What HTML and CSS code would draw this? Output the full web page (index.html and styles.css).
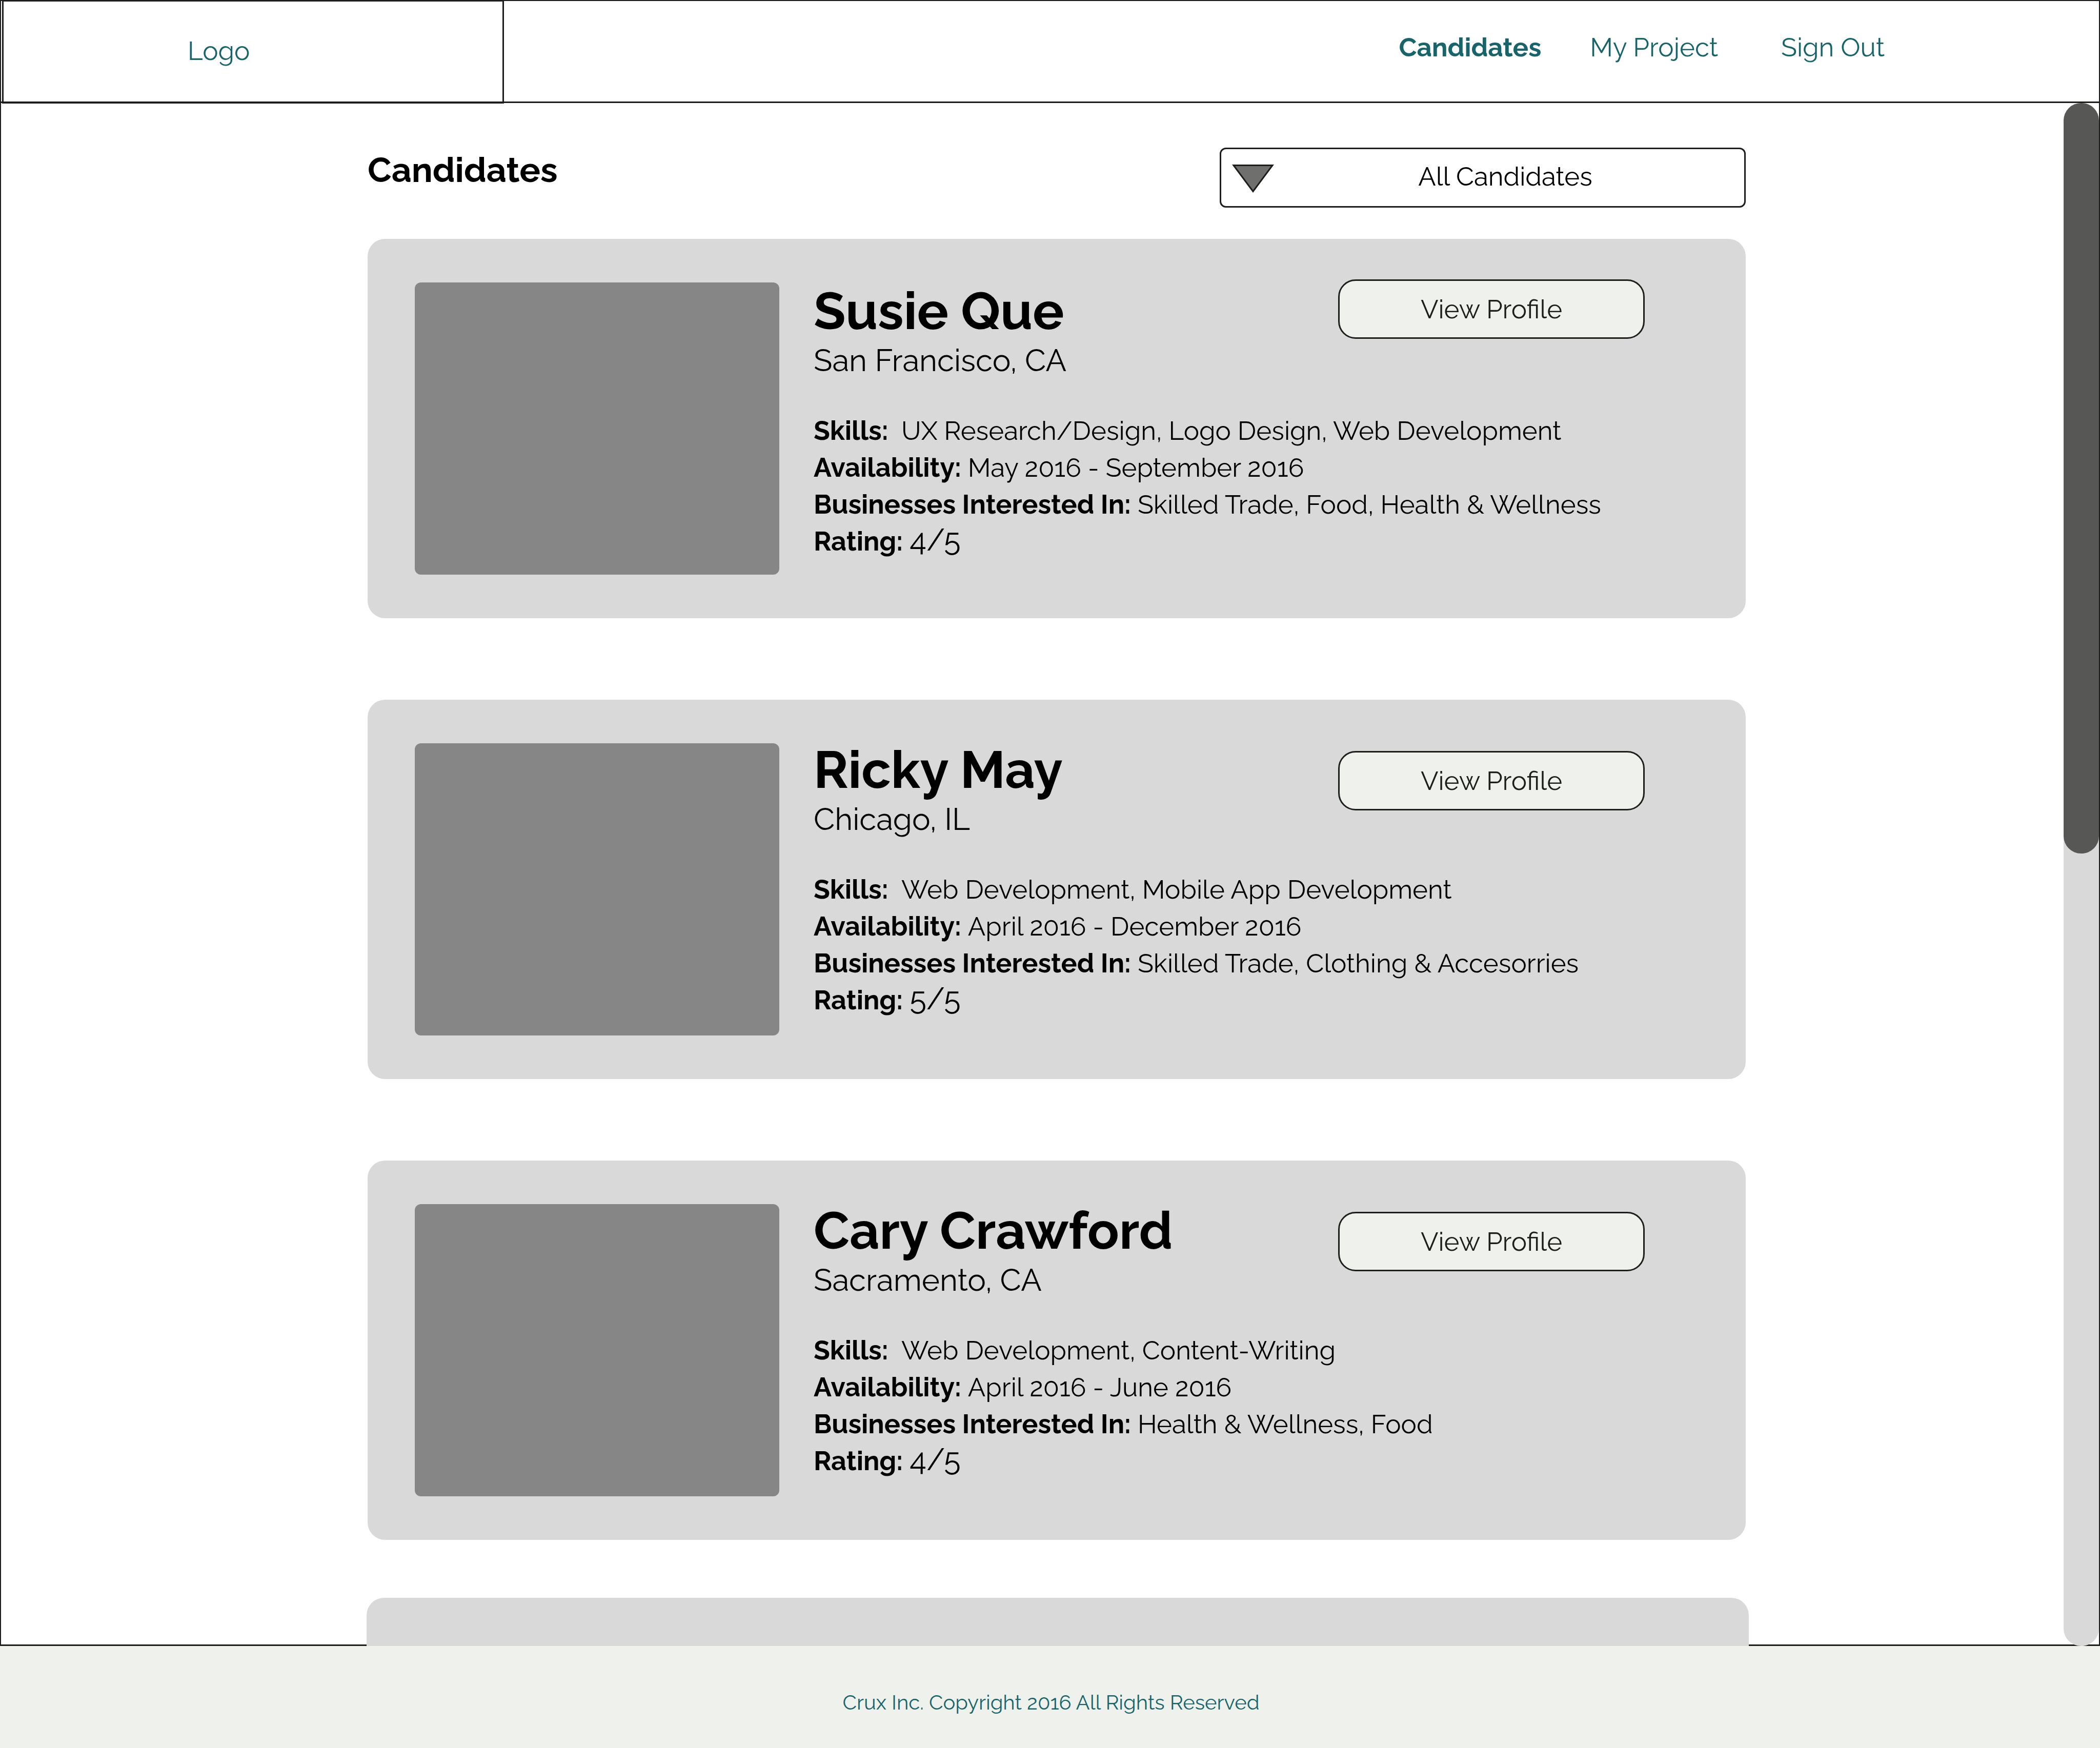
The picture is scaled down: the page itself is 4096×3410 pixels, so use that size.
FILE: index.html
```html
<!DOCTYPE html>
<html lang="en">
<head>
<meta charset="utf-8">
<title>Candidates</title>
<link rel="stylesheet" href="styles.css">
</head>
<body>
<header class="site-header">
  <a class="logo" href="#">Logo</a>
  <nav class="site-nav" aria-label="Main">
    <a class="nav-link nav-link-current" href="#" aria-current="page">Candidates</a>
    <a class="nav-link" href="#">My Project</a>
    <a class="nav-link nav-link-account" href="#">Sign Out</a>
  </nav>
</header>

<main class="page">
  <div class="content">
    <div class="toolbar">
      <h1 class="page-title">Candidates</h1>
      <div class="filter">
        <select class="filter-select" aria-label="Filter candidates">
          <option>All Candidates</option>
        </select>
        <svg class="filter-arrow" viewBox="0 0 82 55" aria-hidden="true"><path d="M3 1.5H79L41 52.5Z"/></svg>
      </div>
    </div>

    <article class="card">
      <div class="photo"></div>
      <div class="info">
        <h2 class="name">Susie Que</h2>
        <p class="city">San Francisco, CA</p>
        <dl class="facts">
          <div class="fact"><dt>Skills:&nbsp;</dt> <dd>UX Research/Design, Logo Design, Web Development</dd></div>
          <div class="fact"><dt>Availability:</dt> <dd>May 2016 - September 2016</dd></div>
          <div class="fact"><dt>Businesses Interested In:</dt> <dd>Skilled Trade, Food, Health &amp; Wellness</dd></div>
          <div class="fact"><dt>Rating:</dt> <dd class="rating">4/5</dd></div>
        </dl>
      </div>
      <button class="profile-button" type="button">View Profile</button>
    </article>

    <article class="card card-compact">
      <div class="photo"></div>
      <div class="info">
        <h2 class="name">Ricky May</h2>
        <p class="city">Chicago, IL</p>
        <dl class="facts">
          <div class="fact"><dt>Skills:&nbsp;</dt> <dd>Web Development, Mobile App Development</dd></div>
          <div class="fact"><dt>Availability:</dt> <dd>April 2016 - December 2016</dd></div>
          <div class="fact"><dt>Businesses Interested In:</dt> <dd>Skilled Trade, Clothing &amp; Accesorries</dd></div>
          <div class="fact"><dt>Rating:</dt> <dd class="rating">5/5</dd></div>
        </dl>
      </div>
      <button class="profile-button" type="button">View Profile</button>
    </article>

    <article class="card card-compact">
      <div class="photo"></div>
      <div class="info">
        <h2 class="name">Cary Crawford</h2>
        <p class="city">Sacramento, CA</p>
        <dl class="facts">
          <div class="fact"><dt>Skills:&nbsp;</dt> <dd>Web Development, Content-Writing</dd></div>
          <div class="fact"><dt>Availability:</dt> <dd>April 2016 - June 2016</dd></div>
          <div class="fact"><dt>Businesses Interested In:</dt> <dd>Health &amp; Wellness, Food</dd></div>
          <div class="fact"><dt>Rating:</dt> <dd class="rating">4/5</dd></div>
        </dl>
      </div>
      <button class="profile-button" type="button">View Profile</button>
    </article>

    <div class="card-peek"></div>
  </div>

  <div class="scroll-track"><div class="scroll-thumb"></div></div>
</main>

<footer class="site-footer">
  <p class="copyright">Crux Inc. Copyright 2016 All Rights Reserved</p>
</footer>
</body>
</html>
```
FILE: styles.css
```css
:root {
  --ink: #1d1d1b;
  --teal: #17656a;
  --panel: #d9d9d9;
  --pale: #eff1ec;
}

* {
  box-sizing: border-box;
}

body {
  margin: 0;
  min-height: 100vh;
  display: flex;
  flex-direction: column;
  background: #fff;
  color: #000;
  font-family: "Raleway", "Lato", sans-serif;
  font-size: 51px;
  line-height: 60px;
}

h1, h2, p, dl, dd {
  margin: 0;
}

/* Header */
.site-header {
  display: flex;
  justify-content: space-between;
  height: 201px;
  padding-left: 2px;
  border: 2px solid var(--ink);
  border-bottom-width: 3px;
}

.logo {
  display: flex;
  flex: none;
  align-items: center;
  width: calc(24% - 3px);
  margin: -2px 0 -4px;
  padding: 0 0 4px 359px;
  border: 3px solid var(--ink);
  color: var(--teal);
  text-decoration: none;
}

.site-nav {
  display: flex;
  gap: 95px;
  margin-right: 418px;
  padding-top: 60px;
}

.nav-link {
  color: var(--teal);
  text-decoration: none;
}

.nav-link-current {
  font-weight: 700;
}

.nav-link-account {
  margin-left: 28px;
}

/* Scrolling page area */
.page {
  flex: 1;
  display: grid;
  grid-template-columns: 715fr 2688fr 689fr;
  border: 2px solid var(--ink);
  border-width: 0 2px 3px;
}

.content {
  grid-column: 2;
  display: flex;
  flex-direction: column;
  margin-bottom: -3px;
}

.toolbar {
  display: flex;
  justify-content: space-between;
  padding: 87px 0 61px;
}

.page-title {
  padding-top: 3px;
  font-size: 68px;
  line-height: 80px;
}

.filter {
  position: relative;
  width: 1026px;
}

.filter-select {
  appearance: none;
  display: block;
  width: 100%;
  height: 117px;
  padding: 0 0 6px 88px;
  border: 3px solid var(--ink);
  border-radius: 12px;
  background: #fff;
  color: #000;
  font: inherit;
  text-align-last: center;
}

.filter-arrow {
  position: absolute;
  left: 24px;
  top: 33px;
  width: 82px;
  height: 55px;
  fill: #6f6f6e;
  stroke: var(--ink);
  stroke-width: 3px;
  pointer-events: none;
}

/* Candidate cards */
.card {
  display: flex;
  align-items: flex-start;
  height: 740px;
  margin-bottom: 159px;
  padding: 79px 197px 0 92px;
  border-radius: 34px;
  background: var(--panel);
}

.photo {
  flex: none;
  width: 711px;
  height: 570px;
  margin: 6px 67px 0 0;
  border-radius: 12px;
  background: #868686;
}

.info {
  flex: 1;
  white-space: nowrap;
}

.name {
  font-size: 102px;
  line-height: 122px;
}

.city {
  font-size: 60px;
  line-height: 72px;
}

.facts {
  padding-top: 65px;
  line-height: 72px;
}

.fact dt,
.fact dd {
  display: inline;
}

.fact dt {
  font-size: 52px;
  font-weight: 700;
}

.fact .rating {
  font-size: 60px;
  line-height: 60px;
}

.profile-button {
  flex: none;
  width: 598px;
  height: 116px;
  margin-left: -598px;
  padding: 0;
  border: 3px solid var(--ink);
  border-radius: 34px;
  background: var(--pale);
  color: var(--ink);
  font: inherit;
}

.card-compact {
  padding-top: 75px;
}

.card-compact .photo {
  margin-top: 10px;
}

.card-compact .profile-button {
  margin-top: 25px;
}

/* Top of the next card, cut off by the footer */
.card-peek {
  flex: 1;
  min-height: 94px;
  margin: -46px -6px 0 -2px;
  border-radius: 34px 34px 0 0;
  background: var(--panel);
}

.scroll-track {
  grid-column: 3;
  justify-self: end;
  width: 69px;
  margin-bottom: -3px;
  border-radius: 34px;
  background: var(--panel);
}

.scroll-thumb {
  height: 1464px;
  border-radius: 34px;
  background: #575755;
}

/* Footer */
.site-footer {
  display: flex;
  justify-content: center;
  padding: 80px 0 60px 4px;
  background: var(--pale);
}

.copyright {
  color: var(--teal);
  font-size: 40px;
}
```
